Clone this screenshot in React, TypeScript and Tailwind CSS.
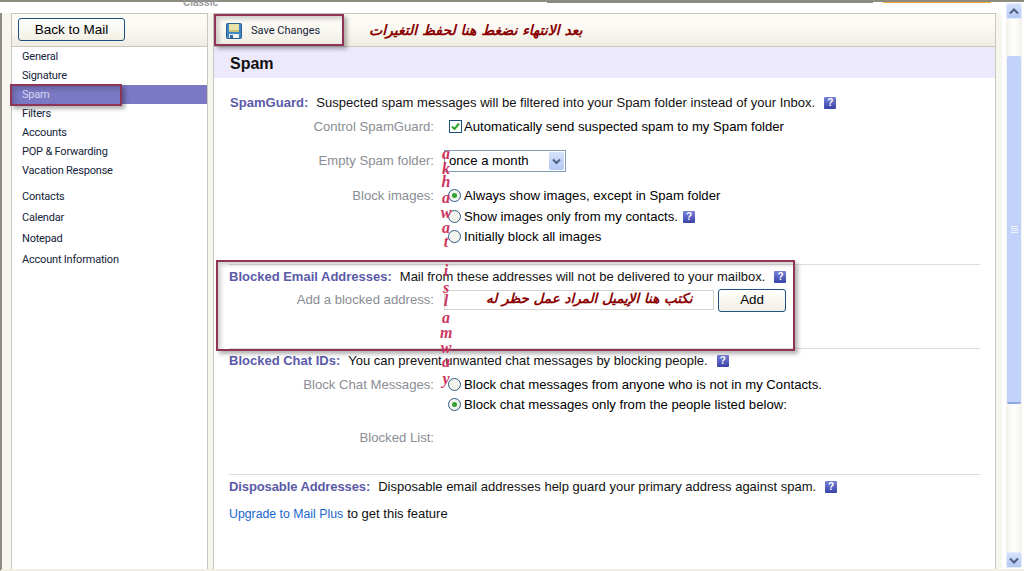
import type { ReactNode } from "react";

const navTop = ["General", "Signature", "Spam", "Filters", "Accounts", "POP & Forwarding", "Vacation Response"];
const navBottom = ["Contacts", "Calendar", "Notepad", "Account Information"];
const watermark = [
  ["a", 155], ["k", 170], ["h", 183], ["a", 199], ["w", 214], ["a", 229], ["t", 243],
  ["i", 272], ["s", 289], ["l", 302], ["a", 319], ["m", 334], ["w", 349], ["a", 363], ["y", 380],
] as const;

const toolbarBg = "bg-gradient-to-b from-[#fdfcf8] via-[#f9f8f1] to-[#eeece2]";
const noteBox = "absolute border-2 border-[#8e3557] shadow-[3px_3px_4px_rgba(0,0,0,0.3),inset_3px_3px_4px_rgba(0,0,0,0.18)]";

function Help({ className = "ml-[9px]" }: { className?: string }) {
  return (
    <span className={`inline-flex h-3 w-3 items-center justify-center rounded-[1px] bg-gradient-to-b from-[#7a82d8] to-[#3a42a8] text-[10px] font-bold leading-none text-white ${className}`}>
      ?
    </span>
  );
}

function Radio({ on }: { on?: boolean }) {
  return (
    <span className="-ml-px mr-[3px] inline-flex h-[13px] w-[13px] shrink-0 items-center justify-center rounded-full border border-[#2f5a84] bg-[#f4f4ee]">
      {on && <span className="h-[5px] w-[5px] rounded-full bg-[#2fa32f]" />}
    </span>
  );
}

function Row({ label, children, className = "" }: { label?: string; children: ReactNode; className?: string }) {
  return (
    <div className={`flex h-5 items-center text-[13.15px] ${className}`}>
      <div className="w-[205px] shrink-0 text-right text-[#8a8d94]">{label}</div>
      <div className="ml-[15px] flex items-center whitespace-nowrap text-black">{children}</div>
    </div>
  );
}

function Heading({ title, children, className = "", titleClass = "" }: { title: string; children: ReactNode; className?: string; titleClass?: string }) {
  return (
    <div className={`flex h-5 items-center whitespace-nowrap ${className}`}>
      <span className={`font-bold text-[#5a5aa8] ${titleClass}`}>{title}</span>
      <span className="ml-[8px] flex items-center text-[#111]">{children}</span>
    </div>
  );
}

function SaveIcon() {
  return (
    <svg width="16" height="16" viewBox="0 0 16 16" className="mr-[9px]">
      <rect x="0.5" y="0.5" width="15" height="15" rx="1" fill="#3f86c4" stroke="#2a5f96" />
      <rect x="3" y="1" width="10" height="8" fill="#e8e3a8" />
      <rect x="3" y="7" width="10" height="2" fill="#c9c27a" />
      <rect x="3" y="11" width="10" height="4" fill="#f0f0f0" />
      <rect x="4" y="12" width="3" height="3" fill="#35679c" />
    </svg>
  );
}

export default function App() {
  return (
    <div className="relative flex h-[571px] w-[1024px] flex-col overflow-hidden bg-white font-['Liberation_Sans',Arial,sans-serif] text-[14px]">
      {/* top strip */}
      <div className="relative h-[13px] shrink-0 border-t-2 border-[#8d8b80]">
        <div className="absolute left-[183px] top-[-4px] text-[10px] font-bold leading-none text-[#999]">Classic</div>
        <div className="absolute left-[547px] top-0 h-px w-[326px] bg-[#8d8b80]" />
        <div className="absolute left-[883px] top-0 h-px w-[108px] bg-[#f0a838]" />
      </div>

      <div className="flex min-h-0 flex-1 border-b-2 border-l-2 border-b-[#f0efe2] border-l-[#8d8b80]">
        <div className="w-[9px] shrink-0 bg-[#f6f5ee]" />

        {/* sidebar */}
        <aside className="flex w-[197px] shrink-0 flex-col border-x border-t border-[#c8c8c0] font-['Roboto',sans-serif] text-[11px] tracking-[-0.2px] text-[#15233a]">
          <div className={`flex h-[33px] shrink-0 items-start border-b border-[#c9c7ba] pl-[6px] pt-[4px] ${toolbarBg}`}>
            <button className="h-[23px] w-[107px] rounded-[3px] border border-[#1c5180] bg-gradient-to-b from-white to-[#f1efe4] font-['Liberation_Sans',sans-serif] text-[13.5px] leading-none tracking-normal text-black">
              Back to Mail
            </button>
          </div>
          <ul>
            {navTop.map((item) => (
              <li
                key={item}
                className={`flex h-[19px] items-center pl-[10px] pt-[2px] ${item === "Spam" ? "bg-[#7b78c4] text-[#d6d6ee]" : ""}`}
              >
                {item}
              </li>
            ))}
          </ul>
          <ul className="mt-[6px]">
            {navBottom.map((item) => (
              <li key={item} className="flex h-[21px] items-center pl-[10px] pt-[2px]">
                {item}
              </li>
            ))}
          </ul>
        </aside>

        <div className="w-[5px] shrink-0 bg-[#f6f5ee]" />

        {/* main panel */}
        <main className="flex w-[783px] shrink-0 flex-col border-x border-t border-[#c8c8c0] text-[13px]">
          <div className={`flex h-[33px] shrink-0 items-center border-b border-[#c9c7ba] pl-[12px] pt-px ${toolbarBg}`}>
            <SaveIcon />
            <span className="mt-[2px] w-[70px] whitespace-nowrap font-['Roboto',sans-serif] text-[11px] text-[#15233a]">Save Changes</span>
            <span
              dir="rtl"
              className="ml-[48px] whitespace-nowrap font-['DejaVu_Sans',sans-serif] text-[14px] font-bold italic text-[#8a0000]"
            >
              بعد الانتهاء نضغط هنا لحفظ التغيرات
            </span>
          </div>
          <div className="flex h-[31px] shrink-0 items-center bg-[#ece9fd] pl-[16px] pt-[2px] text-[16px] font-bold text-[#111]">
            Spam
          </div>

          <div className="px-[15px] pt-[15px]">
            <Heading title="SpamGuard:" className="pl-px text-[13.05px]">
              Suspected spam messages will be filtered into your Spam folder instead of your Inbox.
              <Help />
            </Heading>
            <Row label="Control SpamGuard:" className="mt-[4px]">
              <span className="mr-[2px] flex h-[13px] w-[13px] items-center justify-center border border-[#1c5180] bg-white">
                <svg width="9" height="9" viewBox="0 0 9 9">
                  <path d="M1 4.5 L3.5 7 L8 1.5" fill="none" stroke="#2fa32f" strokeWidth="2" />
                </svg>
              </span>
              Automatically send suspected spam to my Spam folder
            </Row>
            <Row label="Empty Spam folder:" className="mt-[14px]">
              <span className="-ml-[5px] flex h-[22px] w-[122px] items-center justify-between border border-[#7f9db9] pl-[4px] pr-px">
                once a month
                <span className="flex h-[18px] w-[15px] items-center justify-center rounded-[2px] bg-gradient-to-b from-[#d6e2fb] to-[#b3c8f4]">
                  <svg width="9" height="7" viewBox="0 0 9 7">
                    <path d="M1 1.5 L4.5 5 L8 1.5" fill="none" stroke="#4d6185" strokeWidth="2" />
                  </svg>
                </span>
              </span>
            </Row>
            <Row label="Block images:" className="mt-[15px]">
              <Radio on />
              Always show images, except in Spam folder
            </Row>
            <Row className="mt-px">
              <Radio />
              Show images only from my contacts.
              <Help className="ml-[5px]" />
            </Row>
            <Row>
              <Radio />
              Initially block all images
            </Row>

            <div className="mt-[17px] border-t border-[#dcdcd8] pt-[2px]">
              <Heading title="Blocked Email Addresses:">
                Mail from these addresses will not be delivered to your mailbox.
                <Help />
              </Heading>
            </div>
            <Row label="Add a blocked address:" className="mt-[3px]">
              <span className="-ml-[5px] h-[20px] w-[270px] border border-[#d4d4d0] bg-white" />
              <button className="ml-[4px] h-[23px] w-[68px] rounded-[3px] border border-[#1c5180] bg-gradient-to-b from-white to-[#f1efe4] text-[13.33px] leading-none">
                Add
              </button>
            </Row>

            <div className="mt-[38px] border-t border-[#dcdcd8] pt-[2px]">
              <Heading title="Blocked Chat IDs:">
                You can prevent unwanted chat messages by blocking people.
                <Help />
              </Heading>
            </div>
            <Row label="Block Chat Messages:" className="mt-[4px]">
              <Radio />
              Block chat messages from anyone who is not in my Contacts.
            </Row>
            <Row>
              <Radio on />
              Block chat messages only from the people listed below:
            </Row>
            <Row label="Blocked List:" className="mt-[13px]">
              <span />
            </Row>

            <div className="mt-[26px] border-t border-[#dcdcd8] pt-[2px]">
              <Heading title="Disposable Addresses:" titleClass="tracking-[-0.1px]">
                Disposable email addresses help guard your primary address against spam.
                <Help />
              </Heading>
            </div>
            <div className="mt-[7px] flex h-5 items-center text-[#111]">
              <span className="text-[12.3px] text-[#1a66d0]">Upgrade to Mail Plus</span>
              <span className="ml-1">to get this feature</span>
            </div>
          </div>
        </main>

        {/* gutter and scrollbar */}
        <div className="w-[6px] shrink-0 bg-[#f6f5ee]" />
      </div>

      <div className="absolute bottom-[3px] right-[2px] top-[3px] flex w-[16px] flex-col bg-gradient-to-r from-[#f3f1e8] via-white to-[#f3f1e8]">
        <div className="flex h-[16px] items-center justify-center rounded-[2px] border border-[#e4ecfb] bg-gradient-to-b from-[#d6e2fb] to-[#b3c8f4]">
          <svg width="10" height="7" viewBox="0 0 10 7">
            <path d="M1 5.5 L5 1.5 L9 5.5" fill="none" stroke="#4d6185" strokeWidth="2" />
          </svg>
        </div>
        <div className="mx-px mt-[37px] flex h-[348px] flex-col items-center justify-center gap-px rounded-[2px] border-b-2 border-[#8aa8e8] bg-[#c1d3fb]">
          {[0, 1, 2, 3].map((i) => (
            <span key={i} className="h-px w-[7px] bg-[#eef3fe]" />
          ))}
        </div>
        <div className="flex-1" />
        <div className="flex h-[16px] items-center justify-center rounded-[2px] border border-[#e4ecfb] bg-gradient-to-b from-[#d6e2fb] to-[#b3c8f4]">
          <svg width="10" height="7" viewBox="0 0 10 7">
            <path d="M1 1.5 L5 5.5 L9 1.5" fill="none" stroke="#4d6185" strokeWidth="2" />
          </svg>
        </div>
      </div>

      {/* annotations drawn over the page */}
      <div className={`${noteBox} left-[214px] top-[14px] h-[32px] w-[130px]`} />
      <div className={`${noteBox} left-[10px] top-[84px] h-[22px] w-[112px]`} />
      <div className={`${noteBox} left-[216px] top-[260px] h-[91px] w-[579px]`} />
      <div
        dir="rtl"
        className="absolute left-[486px] top-[288px] whitespace-nowrap font-['DejaVu_Sans',sans-serif] text-[13.5px] font-bold italic text-[#8a0000]"
      >
        نكتب هنا الإيميل المراد عمل حظر له
      </div>
      {watermark.map(([ch, y], i) => (
        <span
          key={i}
          className="absolute left-[440px] w-[12px] text-center font-['Liberation_Serif',serif] text-[16px] font-bold italic leading-none text-[#cc3560]"
          style={{ top: y - 9 }}
        >
          {ch}
        </span>
      ))}
    </div>
  );
}
